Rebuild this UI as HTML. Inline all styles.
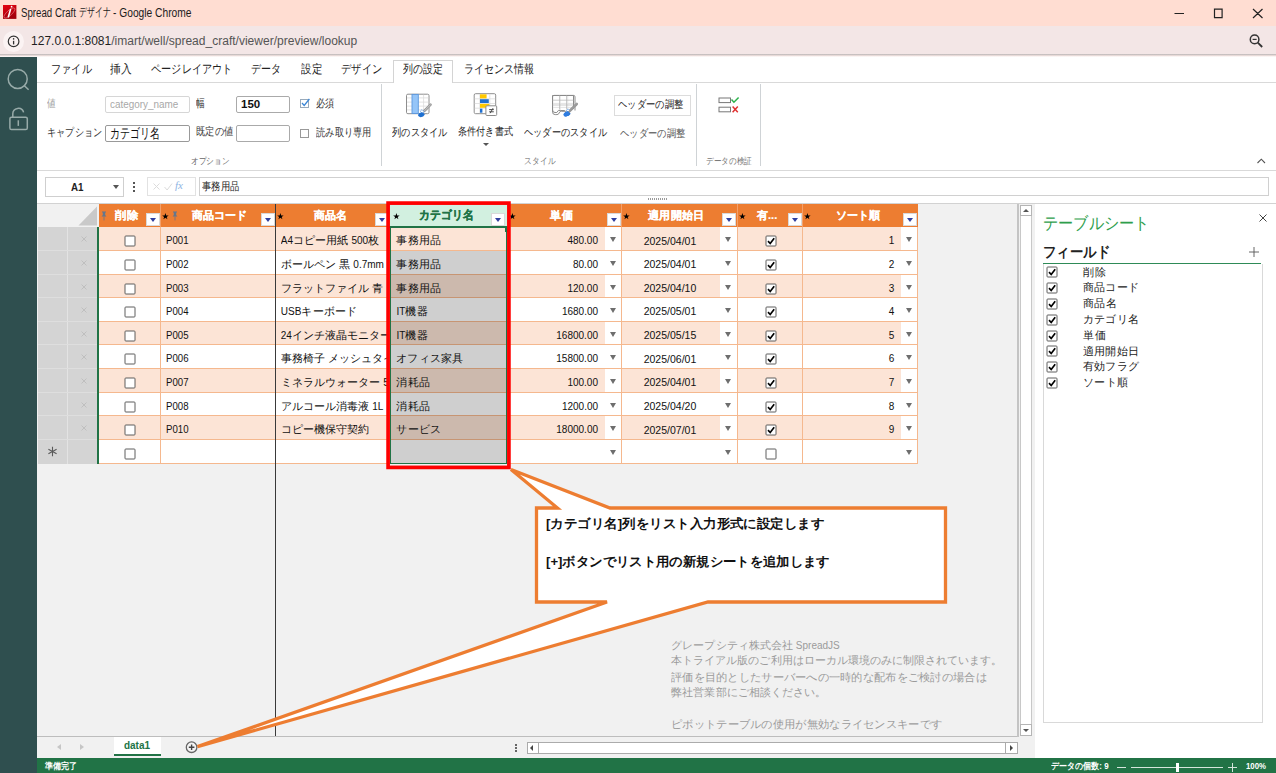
<!DOCTYPE html><html lang="ja"><head><meta charset="utf-8"><title>Spread Craft デザイナ</title><style>
*{box-sizing:border-box;margin:0;padding:0}
html,body{width:1276px;height:773px;overflow:hidden;background:#fff}
body{position:relative;font-family:"Liberation Sans",sans-serif;font-size:11px;color:#222}
.a{position:absolute;white-space:nowrap;overflow:hidden}
.t{position:absolute;white-space:nowrap;line-height:1}
svg{position:absolute;overflow:visible}
.hd{position:absolute;top:204px;height:23px;background:#ED7D31;border-right:1px solid #f19a5e}
.hl{position:absolute;top:0;height:23px;line-height:23px;color:#fff;font-weight:bold;font-size:11px;text-align:center;white-space:nowrap;overflow:hidden}
.fb{position:absolute;top:9px;width:14px;height:13px;background:#fff;border:1px solid #d9d9d9}
.fb:after{content:"";position:absolute;left:2.5px;top:3.5px;border-left:3.5px solid transparent;border-right:3.5px solid transparent;border-top:4px solid #2f3f9f}
.star{position:absolute;top:5px;font-size:10px;color:#000;line-height:12px}
.c{position:absolute;white-space:nowrap;overflow:hidden;font-size:11px;color:#222}
.cb{position:absolute;width:10px;height:10px;border:1px solid #555;border-radius:1.5px;background:#fff}
.dd{position:absolute;background:#fff}
.dd:after{content:"";position:absolute;left:5px;top:10px;border-left:3.5px solid transparent;border-right:3.5px solid transparent;border-top:5px solid #6e6e6e}
.inp{position:absolute;background:#fff;border:1px solid #bdbdbd;border-radius:2px;font-size:12px;line-height:15px;padding-left:4px;white-space:nowrap;overflow:hidden}
</style></head><body>
<div class="a" style="left:0;top:0;width:1276px;height:26px;background:#FFDDD2"></div>
<svg style="left:2.8px;top:5px" width="14" height="14" viewBox="0 0 14 14"><defs><linearGradient id="rg" x1="0" y1="0" x2="0.35" y2="1"><stop offset="0" stop-color="#e6000f"/><stop offset="1" stop-color="#a3000c"/></linearGradient></defs><rect width="13.4" height="13.9" fill="url(#rg)"/><ellipse cx="6.4" cy="8" rx="7" ry="2.5" transform="rotate(-42 6.4 8)" stroke="#f0a0a6" stroke-width="0.5" fill="none"/><path d="M7.5 4.6L5.4 11.8" stroke="#fff" stroke-width="1.6" stroke-linecap="round"/><circle cx="8.6" cy="1.7" r="0.85" fill="#fff"/></svg>
<div class="t" style="left:21.0px;top:7.0px;font-size:12px;color:#1b1b1b;transform:scaleX(0.808);transform-origin:0 0;">Spread Craft</div>
<div class="t" style="left:78.5px;top:7.2px;font-size:11.5px;color:#1b1b1b;transform:scaleX(0.656);transform-origin:0 0;width:48.4px;text-align-last:justify;">デザイナ</div>
<div class="t" style="left:113.0px;top:7.0px;font-size:12px;color:#1b1b1b;transform:scaleX(0.853);transform-origin:0 0;">- Google Chrome</div>
<svg style="left:1170px;top:4px" width="100" height="20" viewBox="0 0 100 20"><path d="M4.5 9.5h9.5 M44.5 5.2h7.6v8.4h-7.6z M83 5l9.5 9 M92.5 5l-9.5 9" stroke="#222" stroke-width="1.2" fill="none"/></svg>
<div class="a" style="left:0;top:26px;width:1276px;height:28px;background:#F3E6E6"></div>
<div class="a" style="left:0;top:54px;width:1276px;height:3px;background:linear-gradient(#c6bfbf 0%,#c9c3c3 38%,#f4e3e0 55%,#fff 100%)"></div>
<div class="a" style="left:3px;top:31px;width:21px;height:21px;border-radius:11px;background:#fbf3f3"></div>
<svg style="left:7px;top:35px" width="14" height="14" viewBox="0 0 14 14"><circle cx="6.6" cy="6.4" r="5.3" stroke="#333" stroke-width="1.2" fill="none"/><path d="M6.6 5.8v3.6" stroke="#333" stroke-width="1.3"/><circle cx="6.6" cy="3.9" r="0.8" fill="#333"/></svg>
<div class="t" style="left:31.2px;top:34.9px;font-size:12.3px;color:#1f1f1f;transform:scaleX(0.978);transform-origin:0 0;">127.0.0.1:8081<span style="color:#555">/imart/well/spread_craft/viewer/preview/lookup</span></div>
<svg style="left:1247px;top:32px" width="18" height="18" viewBox="0 0 18 18"><circle cx="7.6" cy="7.4" r="4.3" stroke="#333" stroke-width="1.5" fill="none"/><path d="M10.8 10.6l4.4 4.4" stroke="#333" stroke-width="1.8"/><path d="M5.6 7.4h4" stroke="#333" stroke-width="1.2"/></svg>
<div class="a" style="left:0;top:57px;width:37px;height:716px;background:#2F4F4F"></div>
<svg style="left:0;top:57px" width="37" height="90" viewBox="0 57 37 90"><circle cx="17.7" cy="78.9" r="9.5" stroke="#98aba9" stroke-width="1.5" fill="none"/><path d="M24.4 85.8l4.2 4" stroke="#98aba9" stroke-width="1.5"/><rect x="9.9" y="117.2" width="17.4" height="12.4" rx="1.6" stroke="#98aba9" stroke-width="1.5" fill="none"/><path d="M12.8 117v-3.2a5.5 5.5 0 0 1 10.8 -1.4" stroke="#98aba9" stroke-width="1.5" fill="none"/><path d="M18.3 120.3v5.6" stroke="#98aba9" stroke-width="1.5"/></svg>
<div class="a" style="left:37px;top:82px;width:1239px;height:1px;background:#d9d9d9"></div>
<div class="a" style="left:393px;top:60px;width:60px;height:23px;background:#fff;border:1px solid #d4d4d4;border-bottom:none"></div>
<div class="t" style="left:50.5px;top:63.8px;font-size:11.5px;color:#222;transform:scaleX(0.844);transform-origin:0 0;width:48.4px;text-align-last:justify;">ファイル</div>
<div class="t" style="left:110.0px;top:63.8px;font-size:11.5px;color:#222;transform:scaleX(0.896);transform-origin:0 0;width:24.4px;text-align-last:justify;">挿入</div>
<div class="t" style="left:150.5px;top:63.8px;font-size:11.5px;color:#222;transform:scaleX(0.846);transform-origin:0 0;width:96.4px;text-align-last:justify;">ページレイアウト</div>
<div class="t" style="left:250.8px;top:63.8px;font-size:11.5px;color:#222;transform:scaleX(0.833);transform-origin:0 0;width:36.4px;text-align-last:justify;">データ</div>
<div class="t" style="left:301.0px;top:63.8px;font-size:11.5px;color:#222;transform:scaleX(0.875);transform-origin:0 0;width:24.4px;text-align-last:justify;">設定</div>
<div class="t" style="left:341.0px;top:63.8px;font-size:11.5px;color:#222;transform:scaleX(0.854);transform-origin:0 0;width:48.4px;text-align-last:justify;">デザイン</div>
<div class="t" style="left:402.6px;top:63.8px;font-size:11.5px;color:#222;transform:scaleX(0.829);transform-origin:0 0;width:48.4px;text-align-last:justify;">列の設定</div>
<div class="t" style="left:464.3px;top:63.8px;font-size:11.5px;color:#222;transform:scaleX(0.832);transform-origin:0 0;width:84.4px;text-align-last:justify;">ライセンス情報</div>
<div class="a" style="left:37px;top:170px;width:1239px;height:1px;background:#d9d9d9"></div>
<div class="a" style="left:381px;top:84px;width:1px;height:82px;background:#cfd3d6"></div>
<div class="a" style="left:696px;top:84px;width:1px;height:82px;background:#cfd3d6"></div>
<div class="a" style="left:760px;top:84px;width:1px;height:82px;background:#cfd3d6"></div>
<div class="t" style="left:47.0px;top:98.0px;font-size:11px;color:#9a9a9a;transform:scaleX(0.773);transform-origin:0 0;width:11.4px;text-align-last:justify;">値</div>
<div class="inp" style="left:105px;top:96px;width:85px;height:17px;border-color:#d6d6d6"></div>
<div class="t" style="left:110.3px;top:98.5px;font-size:11.5px;color:#a8a8a8;transform:scaleX(0.861);transform-origin:0 0;">category_name</div>
<div class="t" style="left:196.3px;top:97.7px;font-size:11px;color:#333;transform:scaleX(0.791);transform-origin:0 0;width:11.4px;text-align-last:justify;">幅</div>
<div class="inp" style="left:236px;top:96px;width:54px;height:17px;color:#111;font-weight:bold;font-size:11.5px;border-color:#aaa">150</div>
<div class="a" style="left:300px;top:99px;width:9px;height:9px;border:1px solid #9ab;background:#fff"></div>
<svg style="left:300px;top:97px" width="11" height="11" viewBox="0 0 11 11"><path d="M2 6l2.2 2.4L9.4 2" stroke="#3b86d6" stroke-width="1.3" fill="none"/></svg>
<div class="t" style="left:316.2px;top:97.7px;font-size:11px;color:#333;transform:scaleX(0.832);transform-origin:0 0;width:22.4px;text-align-last:justify;">必須</div>
<div class="t" style="left:47.0px;top:126.5px;font-size:11px;color:#333;transform:scaleX(0.833);transform-origin:0 0;width:66.4px;text-align-last:justify;">キャプション</div>
<div class="inp" style="left:105px;top:125px;width:85px;height:17px;border-color:#999"></div>
<div class="t" style="left:110.0px;top:126.8px;font-size:13.5px;color:#111;transform:scaleX(0.714);transform-origin:0 0;width:70.4px;text-align-last:justify;">カテゴリ名</div>
<div class="t" style="left:196.3px;top:126.3px;font-size:11px;color:#333;transform:scaleX(0.834);transform-origin:0 0;width:44.4px;text-align-last:justify;">既定の値</div>
<div class="inp" style="left:236px;top:125px;width:54px;height:17px;border-color:#aaa"></div>
<div class="a" style="left:300px;top:129px;width:9px;height:9px;border:1px solid #999;background:#fff"></div>
<div class="t" style="left:316.2px;top:126.5px;font-size:11px;color:#333;transform:scaleX(0.835);transform-origin:0 0;width:66.4px;text-align-last:justify;">読み取り専用</div>
<div class="t" style="left:190.7px;top:156.7px;font-size:9px;color:#666;transform:scaleX(0.851);transform-origin:0 0;width:45.4px;text-align-last:justify;">オプション</div>
<svg style="left:395px;top:88px" width="200" height="34" viewBox="395 88 200 34"><rect x="406.5" y="94.2" width="22.5" height="19.5" rx="1.4" fill="#fff" stroke="#8e8e8e" stroke-width="1"/><path d="M407 97.9h21.5M407 102.1h21.5M407 106.1h21.5M407 109.9h21.5M423.6 94.7v18.5" stroke="#dcdcdc" stroke-width="0.8" fill="none"/><rect x="412" y="94.4" width="6.3" height="19.1" fill="#95c5f8" stroke="#5b97dd" stroke-width="0.9"/><path d="M430.6 104.7L424.2 111" stroke="#9a9a9a" stroke-width="2.5" stroke-linecap="round"/><path d="M430.6 104.7L424.2 111" stroke="#e9e9e9" stroke-width="0.6"/><path d="M422.0 109.6l2.2 2.3l-1.7 1.6l-2.3-2.2z" fill="#fff" stroke="#4a90e2" stroke-width="0.6"/><path d="M417.9 115q1.6-3.2 5.0-2.6l2 2.1q-1.6 3-5 2.6q-1.6-0.4-2-2.1z" fill="#1e6fd0"/><rect x="474.2" y="93.7" width="21.5" height="20" rx="1.4" fill="#fff" stroke="#8e8e8e" stroke-width="1"/><path d="M474.7 98.8h20.5M474.7 103.5h20.5M474.7 108.2h20.5M479.8 94.2v19M489.8 94.2v19" stroke="#dcdcdc" stroke-width="0.8" fill="none"/><rect x="480" y="94.3" width="6.6" height="4.1" fill="#ffc800"/><rect x="480" y="99.2" width="8.8" height="3.8" fill="#1e6fd0"/><rect x="480" y="103.9" width="9.4" height="3.9" fill="#ffc800"/><rect x="480" y="108.7" width="2.4" height="4" fill="#1e6fd0"/><rect x="485.9" y="105.8" width="10.8" height="9.7" rx="1" fill="#fff" stroke="#8a8a8a" stroke-width="1"/><path d="M489.2 109.6h4.6M489.2 111.8h4.6M493 108.2l-2.8 5" stroke="#4a4a4a" stroke-width="1" fill="none"/><path d="M575 110.5V96.8q0-1.4-1.4-1.4h-19.6q-1.4 0-1.4 1.4v15.4q0 2.4 2.6 2.4h1.8q1.7 0 2.1-1.6q0.5-1.7 2.2-1.7h5" fill="#fff" stroke="#8e8e8e" stroke-width="1"/><path d="M553 103.4h21.5M553 107.4h21.5M560.2 96v15.2M567.7 96v15.2" stroke="#dcdcdc" stroke-width="0.8" fill="none"/><path d="M576.8 103.8L570.3 110.2" stroke="#9a9a9a" stroke-width="2.5" stroke-linecap="round"/><path d="M576.8 103.8L570.3 110.2" stroke="#e9e9e9" stroke-width="0.6"/><path d="M568.1 108.8l2.2 2.3l-1.7 1.6l-2.3-2.2z" fill="#fff" stroke="#4a90e2" stroke-width="0.6"/><path d="M563.6 114.2q1.6-3.2 5.0-2.6l2 2.1q-1.6 3-5 2.6q-1.6-0.4-2-2.1z" fill="#1e6fd0"/></svg>
<div class="t" style="left:391.7px;top:126.7px;font-size:11px;color:#222;transform:scaleX(0.835);transform-origin:0 0;width:66.4px;text-align-last:justify;">列のスタイル</div>
<div class="t" style="left:458.0px;top:125.7px;font-size:11px;color:#222;transform:scaleX(0.827);transform-origin:0 0;width:66.4px;text-align-last:justify;">条件付き書式</div>
<div class="a" style="left:483px;top:143px;width:0;height:0;border-left:3px solid transparent;border-right:3px solid transparent;border-top:3.5px solid #555"></div>
<svg style="left:551px;top:94px" width="28" height="24" viewBox="0 0 28 24"><path d="M1.5 1.5h21v13.5 M1.5 1.5v14.5q0 2.5 2.5 2.5h1.8q1.5-3.2 3.5-2h4.5" fill="none" stroke="#8a8a8a" stroke-width="1"/><path d="M1.5 6.2h21M1.5 11h21M8.5 1.5v14M15.5 1.5v14" stroke="#b5b5b5" stroke-width="0.7" fill="none"/><path d="M25.5 10.5L17.5 18.5" stroke="#9a9a9a" stroke-width="2.2" stroke-linecap="round"/><ellipse cx="15.5" cy="20" rx="3.2" ry="2.2" fill="#2f7de0" transform="rotate(-35 15.5 20)"/></svg>
<div class="t" style="left:523.9px;top:126.7px;font-size:11px;color:#222;transform:scaleX(0.835);transform-origin:0 0;width:99.4px;text-align-last:justify;">ヘッダーのスタイル</div>
<div class="a" style="left:614px;top:95px;width:77px;height:21px;border:1px solid #dcdcdc;background:#fff"></div>
<div class="t" style="left:618.0px;top:99.3px;font-size:11px;color:#222;transform:scaleX(0.844);transform-origin:0 0;width:77.4px;text-align-last:justify;">ヘッダーの調整</div>
<div class="t" style="left:620.4px;top:127.8px;font-size:11px;color:#555;transform:scaleX(0.844);transform-origin:0 0;width:77.4px;text-align-last:justify;">ヘッダーの調整</div>
<div class="t" style="left:524.0px;top:156.8px;font-size:9px;color:#777;transform:scaleX(0.861);transform-origin:0 0;width:36.4px;text-align-last:justify;">スタイル</div>
<svg style="left:718px;top:96px" width="22" height="18" viewBox="0 0 22 18"><rect x="1" y="2" width="11.5" height="4.6" fill="#fff" stroke="#777" stroke-width="1"/><rect x="1" y="11.2" width="11.5" height="4.6" fill="#fff" stroke="#777" stroke-width="1"/><path d="M13.5 3.6l2.4 2.6L20.6 1.4" stroke="#2bb24c" stroke-width="1.5" fill="none"/><path d="M14.6 10.6l5.2 5.6M19.8 10.6l-5.2 5.6" stroke="#e03131" stroke-width="1.5" fill="none"/></svg>
<div class="t" style="left:706.0px;top:156.7px;font-size:9px;color:#777;transform:scaleX(0.846);transform-origin:0 0;width:54.4px;text-align-last:justify;">データの検証</div>
<svg style="left:1256px;top:157px" width="10" height="8" viewBox="0 0 10 8"><path d="M1.5 6l3.8-3.8L9 6" stroke="#555" stroke-width="1.1" fill="none"/></svg>
<div class="a" style="left:45px;top:177px;width:79px;height:20px;border:1px solid #cfcfcf;background:#fff"></div>
<div class="t" style="left:70.8px;top:181.6px;font-size:11.5px;color:#222;font-weight:bold;transform:scaleX(0.850);transform-origin:0 0;">A1</div>
<div class="a" style="left:113px;top:185px;width:0;height:0;border-left:3px solid transparent;border-right:3px solid transparent;border-top:4px solid #555"></div>
<div class="a" style="left:133px;top:182px;width:2px;height:2px;background:#555"></div>
<div class="a" style="left:133px;top:186px;width:2px;height:2px;background:#555"></div>
<div class="a" style="left:133px;top:190px;width:2px;height:2px;background:#555"></div>
<div class="a" style="left:147px;top:177px;width:49px;height:19px;border:1px solid #e2e2e2;background:#fff"></div>
<svg style="left:152px;top:181px" width="40" height="12" viewBox="0 0 40 12"><path d="M1.5 2.5l6 6M7.5 2.5l-6 6" stroke="#dcdcdc" stroke-width="1"/><path d="M12.5 6l2.6 3L20 2.6" stroke="#dcdcdc" stroke-width="1" fill="none"/></svg>
<div class="t" style="left:175px;top:180px;font-family:'Liberation Serif',serif;font-style:italic;font-size:11px;color:#8eb4e3">fx</div>
<div class="a" style="left:199px;top:177px;width:1070px;height:19px;border:1px solid #d0d0d0;background:#fff"></div>
<div class="t" style="left:202.4px;top:181.3px;font-size:10.5px;color:#222;transform:scaleX(0.843);transform-origin:0 0;width:44.4px;text-align-last:justify;">事務用品</div>
<div class="a" style="left:648px;top:198px;width:1px;height:2px;background:#9a9a9a"></div>
<div class="a" style="left:650px;top:198px;width:1px;height:2px;background:#9a9a9a"></div>
<div class="a" style="left:652px;top:198px;width:1px;height:2px;background:#9a9a9a"></div>
<div class="a" style="left:654px;top:198px;width:1px;height:2px;background:#9a9a9a"></div>
<div class="a" style="left:656px;top:198px;width:1px;height:2px;background:#9a9a9a"></div>
<div class="a" style="left:658px;top:198px;width:1px;height:2px;background:#9a9a9a"></div>
<div class="a" style="left:660px;top:198px;width:1px;height:2px;background:#9a9a9a"></div>
<div class="a" style="left:662px;top:198px;width:1px;height:2px;background:#9a9a9a"></div>
<div class="a" style="left:664px;top:198px;width:1px;height:2px;background:#9a9a9a"></div>
<div class="a" style="left:666px;top:198px;width:1px;height:2px;background:#9a9a9a"></div>
<div class="a" style="left:37px;top:204px;width:981px;height:533px;background:#F1F1F1"></div>
<div class="a" style="left:37px;top:736px;width:981px;height:1px;background:#bdbdbd"></div>
<div class="a" style="left:37px;top:203px;width:1239px;height:1px;background:#d2d2d2"></div>
<svg style="left:78px;top:206px" width="20" height="20" viewBox="0 0 20 20"><path d="M19 0.5V19.5H0.5z" fill="#c9c9c9"/></svg>
<div class="a" style="left:38px;top:227px;width:60px;height:237px;background:#D4D4D4"></div>
<div class="a" style="left:67px;top:227px;width:1px;height:237px;background:#e3e3e3"></div>
<div class="a" style="left:38px;top:250px;width:60px;height:1px;background:#dedede"></div>
<div class="a" style="left:38px;top:274px;width:60px;height:1px;background:#dedede"></div>
<div class="a" style="left:38px;top:297px;width:60px;height:1px;background:#dedede"></div>
<div class="a" style="left:38px;top:321px;width:60px;height:1px;background:#dedede"></div>
<div class="a" style="left:38px;top:344px;width:60px;height:1px;background:#dedede"></div>
<div class="a" style="left:38px;top:368px;width:60px;height:1px;background:#dedede"></div>
<div class="a" style="left:38px;top:392px;width:60px;height:1px;background:#dedede"></div>
<div class="a" style="left:38px;top:415px;width:60px;height:1px;background:#dedede"></div>
<div class="a" style="left:38px;top:439px;width:60px;height:1px;background:#dedede"></div>
<svg style="left:80px;top:235px" width="8" height="8" viewBox="0 0 8 8"><path d="M1.5 1.5l5 5M6.5 1.5l-5 5" stroke="#bcbcbc" stroke-width="0.9"/></svg>
<svg style="left:80px;top:259px" width="8" height="8" viewBox="0 0 8 8"><path d="M1.5 1.5l5 5M6.5 1.5l-5 5" stroke="#bcbcbc" stroke-width="0.9"/></svg>
<svg style="left:80px;top:283px" width="8" height="8" viewBox="0 0 8 8"><path d="M1.5 1.5l5 5M6.5 1.5l-5 5" stroke="#bcbcbc" stroke-width="0.9"/></svg>
<svg style="left:80px;top:306px" width="8" height="8" viewBox="0 0 8 8"><path d="M1.5 1.5l5 5M6.5 1.5l-5 5" stroke="#bcbcbc" stroke-width="0.9"/></svg>
<svg style="left:80px;top:330px" width="8" height="8" viewBox="0 0 8 8"><path d="M1.5 1.5l5 5M6.5 1.5l-5 5" stroke="#bcbcbc" stroke-width="0.9"/></svg>
<svg style="left:80px;top:353px" width="8" height="8" viewBox="0 0 8 8"><path d="M1.5 1.5l5 5M6.5 1.5l-5 5" stroke="#bcbcbc" stroke-width="0.9"/></svg>
<svg style="left:80px;top:377px" width="8" height="8" viewBox="0 0 8 8"><path d="M1.5 1.5l5 5M6.5 1.5l-5 5" stroke="#bcbcbc" stroke-width="0.9"/></svg>
<svg style="left:80px;top:401px" width="8" height="8" viewBox="0 0 8 8"><path d="M1.5 1.5l5 5M6.5 1.5l-5 5" stroke="#bcbcbc" stroke-width="0.9"/></svg>
<svg style="left:80px;top:424px" width="8" height="8" viewBox="0 0 8 8"><path d="M1.5 1.5l5 5M6.5 1.5l-5 5" stroke="#bcbcbc" stroke-width="0.9"/></svg>
<svg style="left:47px;top:446px" width="11" height="11" viewBox="0 0 11 11"><path d="M5.5 0.8v9.4M1.4 3.2l8.2 4.6M9.6 3.2l-8.2 4.6" stroke="#5a5a5a" stroke-width="1.1" fill="none"/></svg>
<div class="a" style="left:99px;top:227px;width:819px;height:24px;background:#FCE4D6"></div>
<div class="a" style="left:99px;top:250px;width:819px;height:1px;background:#F5B88E"></div>
<div class="a" style="left:99px;top:251px;width:819px;height:24px;background:#fff"></div>
<div class="a" style="left:99px;top:274px;width:819px;height:1px;background:#F5B88E"></div>
<div class="a" style="left:99px;top:275px;width:819px;height:23px;background:#FCE4D6"></div>
<div class="a" style="left:99px;top:297px;width:819px;height:1px;background:#F5B88E"></div>
<div class="a" style="left:99px;top:298px;width:819px;height:24px;background:#fff"></div>
<div class="a" style="left:99px;top:321px;width:819px;height:1px;background:#F5B88E"></div>
<div class="a" style="left:99px;top:322px;width:819px;height:23px;background:#FCE4D6"></div>
<div class="a" style="left:99px;top:344px;width:819px;height:1px;background:#F5B88E"></div>
<div class="a" style="left:99px;top:345px;width:819px;height:24px;background:#fff"></div>
<div class="a" style="left:99px;top:368px;width:819px;height:1px;background:#F5B88E"></div>
<div class="a" style="left:99px;top:369px;width:819px;height:24px;background:#FCE4D6"></div>
<div class="a" style="left:99px;top:392px;width:819px;height:1px;background:#F5B88E"></div>
<div class="a" style="left:99px;top:393px;width:819px;height:23px;background:#fff"></div>
<div class="a" style="left:99px;top:415px;width:819px;height:1px;background:#F5B88E"></div>
<div class="a" style="left:99px;top:416px;width:819px;height:24px;background:#FCE4D6"></div>
<div class="a" style="left:99px;top:439px;width:819px;height:1px;background:#F5B88E"></div>
<div class="a" style="left:99px;top:440px;width:819px;height:24px;background:#fff"></div>
<div class="a" style="left:99px;top:463px;width:819px;height:1px;background:#F5B88E"></div>
<div class="a" style="left:160px;top:227px;width:1px;height:237px;background:#F5B88E"></div>
<div class="a" style="left:388px;top:227px;width:1px;height:237px;background:#F5B88E"></div>
<div class="a" style="left:508px;top:227px;width:1px;height:237px;background:#F5B88E"></div>
<div class="a" style="left:621px;top:227px;width:1px;height:237px;background:#F5B88E"></div>
<div class="a" style="left:737px;top:227px;width:1px;height:237px;background:#F5B88E"></div>
<div class="a" style="left:802px;top:227px;width:1px;height:237px;background:#F5B88E"></div>
<div class="a" style="left:917px;top:227px;width:1px;height:237px;background:#F5B88E"></div>
<div class="dd" style="left:605px;top:227px;width:16px;height:23px"></div>
<div class="dd" style="left:720px;top:227px;width:17px;height:23px"></div>
<div class="dd" style="left:901px;top:227px;width:16px;height:23px"></div>
<div class="dd" style="left:605px;top:251px;width:16px;height:23px"></div>
<div class="dd" style="left:720px;top:251px;width:17px;height:23px"></div>
<div class="dd" style="left:901px;top:251px;width:16px;height:23px"></div>
<div class="dd" style="left:605px;top:275px;width:16px;height:22px"></div>
<div class="dd" style="left:720px;top:275px;width:17px;height:22px"></div>
<div class="dd" style="left:901px;top:275px;width:16px;height:22px"></div>
<div class="dd" style="left:605px;top:298px;width:16px;height:23px"></div>
<div class="dd" style="left:720px;top:298px;width:17px;height:23px"></div>
<div class="dd" style="left:901px;top:298px;width:16px;height:23px"></div>
<div class="dd" style="left:605px;top:322px;width:16px;height:22px"></div>
<div class="dd" style="left:720px;top:322px;width:17px;height:22px"></div>
<div class="dd" style="left:901px;top:322px;width:16px;height:22px"></div>
<div class="dd" style="left:605px;top:345px;width:16px;height:23px"></div>
<div class="dd" style="left:720px;top:345px;width:17px;height:23px"></div>
<div class="dd" style="left:901px;top:345px;width:16px;height:23px"></div>
<div class="dd" style="left:605px;top:369px;width:16px;height:23px"></div>
<div class="dd" style="left:720px;top:369px;width:17px;height:23px"></div>
<div class="dd" style="left:901px;top:369px;width:16px;height:23px"></div>
<div class="dd" style="left:605px;top:393px;width:16px;height:22px"></div>
<div class="dd" style="left:720px;top:393px;width:17px;height:22px"></div>
<div class="dd" style="left:901px;top:393px;width:16px;height:22px"></div>
<div class="dd" style="left:605px;top:416px;width:16px;height:23px"></div>
<div class="dd" style="left:720px;top:416px;width:17px;height:23px"></div>
<div class="dd" style="left:901px;top:416px;width:16px;height:23px"></div>
<div class="dd" style="left:605px;top:440px;width:16px;height:23px"></div>
<div class="dd" style="left:720px;top:440px;width:17px;height:23px"></div>
<div class="dd" style="left:901px;top:440px;width:16px;height:23px"></div>
<div class="a" style="left:390px;top:251px;width:117px;height:213px;background:rgba(0,0,0,0.19)"></div>
<div class="a" style="left:99px;top:204px;width:61px;height:23px;background:#ED7D31"></div>
<div class="a" style="left:160px;top:204px;width:115px;height:23px;background:#ED7D31"></div>
<div class="a" style="left:276px;top:204px;width:112px;height:23px;background:#ED7D31"></div>
<div class="a" style="left:508px;top:204px;width:114px;height:23px;background:#ED7D31"></div>
<div class="a" style="left:622px;top:204px;width:115px;height:23px;background:#ED7D31"></div>
<div class="a" style="left:737px;top:204px;width:66px;height:23px;background:#ED7D31"></div>
<div class="a" style="left:803px;top:204px;width:115px;height:23px;background:#ED7D31"></div>
<div class="a" style="left:160px;top:204px;width:1px;height:23px;background:#f3a06a"></div>
<div class="a" style="left:621px;top:204px;width:1px;height:23px;background:#f3a06a"></div>
<div class="a" style="left:737px;top:204px;width:1px;height:23px;background:#f3a06a"></div>
<div class="a" style="left:802px;top:204px;width:1px;height:23px;background:#f3a06a"></div>
<div class="a" style="left:388px;top:204px;width:120px;height:23px;background:#D2F0E0"></div>
<div class="a" style="left:388px;top:226px;width:120px;height:2px;background:#217346"></div>
<svg style="left:100.7px;top:210.6px" width="6" height="10" viewBox="0 0 6 10"><path d="M1 0.5h4v1.1h-0.8v2.3l1.2 1.5h-4.8l1.2-1.5v-2.3h-0.8z" fill="#64778d"/><path d="M3 5.4v4" stroke="#64778d" stroke-width="0.8"/></svg>
<svg style="left:171.6px;top:210.6px" width="6" height="10" viewBox="0 0 6 10"><path d="M1 0.5h4v1.1h-0.8v2.3l1.2 1.5h-4.8l1.2-1.5v-2.3h-0.8z" fill="#64778d"/><path d="M3 5.4v4" stroke="#64778d" stroke-width="0.8"/></svg>
<div class="t" style="left:115.4px;top:210.2px;font-size:11px;color:#fff;font-weight:bold;-webkit-text-stroke:0.22px #fff;transform:scaleX(1.027);transform-origin:0 0;width:22.4px;text-align-last:justify;">削除</div>
<div class="fb" style="left:146px;top:213px"></div>
<div class="t" style="left:192.0px;top:210.2px;font-size:11px;color:#fff;font-weight:bold;-webkit-text-stroke:0.22px #fff;width:55.4px;text-align-last:justify;">商品コード</div>
<div class="fb" style="left:261px;top:213px"></div>
<svg style="left:161.9px;top:212.6px" width="7" height="7" viewBox="0 0 7 7"><polygon points="3.40,0.10 4.19,2.41 6.63,2.45 4.68,3.92 5.40,6.25 3.40,4.85 1.40,6.25 2.12,3.92 0.17,2.45 2.61,2.41" fill="#000"/></svg>
<div class="t" style="left:313.6px;top:210.2px;font-size:11px;color:#fff;font-weight:bold;-webkit-text-stroke:0.22px #fff;width:33.4px;text-align-last:justify;">商品名</div>
<div class="fb" style="left:375px;top:213px"></div>
<svg style="left:277.3px;top:212.6px" width="7" height="7" viewBox="0 0 7 7"><polygon points="3.40,0.10 4.19,2.41 6.63,2.45 4.68,3.92 5.40,6.25 3.40,4.85 1.40,6.25 2.12,3.92 0.17,2.45 2.61,2.41" fill="#000"/></svg>
<div class="t" style="left:550.3px;top:210.2px;font-size:11px;color:#fff;font-weight:bold;-webkit-text-stroke:0.22px #fff;width:22.4px;text-align-last:justify;">単価</div>
<div class="fb" style="left:607px;top:213px"></div>
<svg style="left:509.2px;top:212.6px" width="7" height="7" viewBox="0 0 7 7"><polygon points="3.40,0.10 4.19,2.41 6.63,2.45 4.68,3.92 5.40,6.25 3.40,4.85 1.40,6.25 2.12,3.92 0.17,2.45 2.61,2.41" fill="#000"/></svg>
<div class="t" style="left:648.4px;top:210.2px;font-size:11px;color:#fff;font-weight:bold;-webkit-text-stroke:0.22px #fff;width:55.4px;text-align-last:justify;">適用開始日</div>
<div class="fb" style="left:722px;top:213px"></div>
<svg style="left:623.2px;top:212.6px" width="7" height="7" viewBox="0 0 7 7"><polygon points="3.40,0.10 4.19,2.41 6.63,2.45 4.68,3.92 5.40,6.25 3.40,4.85 1.40,6.25 2.12,3.92 0.17,2.45 2.61,2.41" fill="#000"/></svg>
<div class="t" style="left:756.6px;top:210.2px;font-size:11px;color:#fff;font-weight:bold;-webkit-text-stroke:0.22px #fff;width:20.6px;text-align-last:justify;">有...</div>
<div class="fb" style="left:788px;top:213px"></div>
<svg style="left:738.7px;top:212.6px" width="7" height="7" viewBox="0 0 7 7"><polygon points="3.40,0.10 4.19,2.41 6.63,2.45 4.68,3.92 5.40,6.25 3.40,4.85 1.40,6.25 2.12,3.92 0.17,2.45 2.61,2.41" fill="#000"/></svg>
<div class="t" style="left:835.8px;top:210.2px;font-size:11px;color:#fff;font-weight:bold;-webkit-text-stroke:0.22px #fff;width:44.4px;text-align-last:justify;">ソート順</div>
<div class="fb" style="left:903px;top:213px"></div>
<svg style="left:803.9px;top:212.6px" width="7" height="7" viewBox="0 0 7 7"><polygon points="3.40,0.10 4.19,2.41 6.63,2.45 4.68,3.92 5.40,6.25 3.40,4.85 1.40,6.25 2.12,3.92 0.17,2.45 2.61,2.41" fill="#000"/></svg>
<svg style="left:392.6px;top:212.6px" width="7" height="7" viewBox="0 0 7 7"><polygon points="3.40,0.10 4.19,2.41 6.63,2.45 4.68,3.92 5.40,6.25 3.40,4.85 1.40,6.25 2.12,3.92 0.17,2.45 2.61,2.41" fill="#000"/></svg>
<div class="t" style="left:418.8px;top:209.8px;font-size:11.5px;color:#217346;font-weight:bold;-webkit-text-stroke:0.3px #217346;transform:scaleX(0.902);transform-origin:0 0;width:60.4px;text-align-last:justify;">カテゴリ名</div>
<div class="fb" style="left:491px;top:213px"></div>
<div class="a" style="left:275px;top:204px;width:1px;height:532px;background:#3a3a3a"></div>
<div class="a" style="left:97px;top:227px;width:2px;height:237px;background:#217346"></div>
<div class="a" style="left:390px;top:227px;width:117px;height:237px;border:1px solid #217346"></div>
<div class="a" style="left:505px;top:228px;width:3px;height:4px;background:#217346"></div>
<svg style="left:124px;top:235px" width="12" height="12" viewBox="0 0 12 12"><rect x="1" y="1" width="10" height="10" rx="0.8" fill="#fff" stroke="#4d4d4d" stroke-width="0.9"/></svg>
<svg style="left:765px;top:235px" width="12" height="12" viewBox="0 0 12 12"><rect x="1" y="1" width="10" height="10" rx="0.8" fill="#fff" stroke="#4d4d4d" stroke-width="0.9"/><path d="M3 6.2l2.2 2.3L9.2 3.3" stroke="#000" stroke-width="1.7" fill="none"/></svg>
<div class="t" style="left:165.5px;top:236.2px;font-size:10px;color:#111;transform:scaleX(0.963);transform-origin:0 0;">P001</div>
<div class="a" style="left:280.8px;top:232.2px;width:106.5px;height:17.0px"><div class="t" style="left:0;top:3px;font-size:11px;color:#111;width:98.4px;text-align-last:justify;"><span style="font-size:10px">A4</span>コピー用紙 <span style="font-size:10px">500</span>枚</div></div>
<div class="t" style="left:396.4px;top:235.2px;font-size:11px;color:#111;width:44.4px;text-align-last:justify;">事務用品</div>
<div class="t" style="left:567.4px;top:236.2px;font-size:10px;color:#111;">480.00</div>
<div class="t" style="left:643.7px;top:235.6px;font-size:10.5px;color:#111;">2025/04/01</div>
<div class="t" style="left:888.7px;top:236.2px;font-size:10px;color:#111;">1</div>
<svg style="left:124px;top:259px" width="12" height="12" viewBox="0 0 12 12"><rect x="1" y="1" width="10" height="10" rx="0.8" fill="#fff" stroke="#4d4d4d" stroke-width="0.9"/></svg>
<svg style="left:765px;top:259px" width="12" height="12" viewBox="0 0 12 12"><rect x="1" y="1" width="10" height="10" rx="0.8" fill="#fff" stroke="#4d4d4d" stroke-width="0.9"/><path d="M3 6.2l2.2 2.3L9.2 3.3" stroke="#000" stroke-width="1.7" fill="none"/></svg>
<div class="t" style="left:165.5px;top:259.8px;font-size:10px;color:#111;transform:scaleX(0.963);transform-origin:0 0;">P002</div>
<div class="a" style="left:280.8px;top:255.8px;width:106.5px;height:17.0px"><div class="t" style="left:0;top:3px;font-size:11px;color:#111;width:103.1px;text-align-last:justify;">ボールペン 黒 <span style="font-size:10px">0.7mm</span></div></div>
<div class="t" style="left:396.4px;top:258.8px;font-size:11px;color:#111;width:44.4px;text-align-last:justify;">事務用品</div>
<div class="t" style="left:573.0px;top:259.8px;font-size:10px;color:#111;">80.00</div>
<div class="t" style="left:643.7px;top:259.2px;font-size:10.5px;color:#111;">2025/04/01</div>
<div class="t" style="left:888.7px;top:259.8px;font-size:10px;color:#111;">2</div>
<svg style="left:124px;top:283px" width="12" height="12" viewBox="0 0 12 12"><rect x="1" y="1" width="10" height="10" rx="0.8" fill="#fff" stroke="#4d4d4d" stroke-width="0.9"/></svg>
<svg style="left:765px;top:283px" width="12" height="12" viewBox="0 0 12 12"><rect x="1" y="1" width="10" height="10" rx="0.8" fill="#fff" stroke="#4d4d4d" stroke-width="0.9"/><path d="M3 6.2l2.2 2.3L9.2 3.3" stroke="#000" stroke-width="1.7" fill="none"/></svg>
<div class="t" style="left:165.5px;top:283.5px;font-size:10px;color:#111;transform:scaleX(0.963);transform-origin:0 0;">P003</div>
<div class="a" style="left:280.8px;top:279.5px;width:106.5px;height:17.0px"><div class="t" style="left:0;top:3px;font-size:11px;color:#111;width:102.5px;text-align-last:justify;">フラットファイル 青</div></div>
<div class="t" style="left:396.4px;top:282.5px;font-size:11px;color:#111;width:44.4px;text-align-last:justify;">事務用品</div>
<div class="t" style="left:567.4px;top:283.5px;font-size:10px;color:#111;">120.00</div>
<div class="t" style="left:643.7px;top:282.8px;font-size:10.5px;color:#111;">2025/04/10</div>
<div class="t" style="left:888.7px;top:283.5px;font-size:10px;color:#111;">3</div>
<svg style="left:124px;top:306px" width="12" height="12" viewBox="0 0 12 12"><rect x="1" y="1" width="10" height="10" rx="0.8" fill="#fff" stroke="#4d4d4d" stroke-width="0.9"/></svg>
<svg style="left:765px;top:306px" width="12" height="12" viewBox="0 0 12 12"><rect x="1" y="1" width="10" height="10" rx="0.8" fill="#fff" stroke="#4d4d4d" stroke-width="0.9"/><path d="M3 6.2l2.2 2.3L9.2 3.3" stroke="#000" stroke-width="1.7" fill="none"/></svg>
<div class="t" style="left:165.5px;top:307.1px;font-size:10px;color:#111;transform:scaleX(0.963);transform-origin:0 0;">P004</div>
<div class="a" style="left:280.8px;top:303.1px;width:106.5px;height:17.0px"><div class="t" style="left:0;top:3px;font-size:11px;color:#111;width:76.0px;text-align-last:justify;"><span style="font-size:10px">USB</span>キーボード</div></div>
<div class="t" style="left:396.4px;top:306.1px;font-size:11px;color:#111;width:31.3px;text-align-last:justify;"><span style="font-size:10px">IT</span>機器</div>
<div class="t" style="left:561.9px;top:307.1px;font-size:10px;color:#111;">1680.00</div>
<div class="t" style="left:643.7px;top:306.4px;font-size:10.5px;color:#111;">2025/05/01</div>
<div class="t" style="left:888.7px;top:307.1px;font-size:10px;color:#111;">4</div>
<svg style="left:124px;top:330px" width="12" height="12" viewBox="0 0 12 12"><rect x="1" y="1" width="10" height="10" rx="0.8" fill="#fff" stroke="#4d4d4d" stroke-width="0.9"/></svg>
<svg style="left:765px;top:330px" width="12" height="12" viewBox="0 0 12 12"><rect x="1" y="1" width="10" height="10" rx="0.8" fill="#fff" stroke="#4d4d4d" stroke-width="0.9"/><path d="M3 6.2l2.2 2.3L9.2 3.3" stroke="#000" stroke-width="1.7" fill="none"/></svg>
<div class="t" style="left:165.5px;top:330.7px;font-size:10px;color:#111;transform:scaleX(0.963);transform-origin:0 0;">P005</div>
<div class="a" style="left:280.8px;top:326.7px;width:106.5px;height:17.0px"><div class="t" style="left:0;top:3px;font-size:11px;color:#111;width:110.5px;text-align-last:justify;"><span style="font-size:10px">24</span>インチ液晶モニター</div></div>
<div class="t" style="left:396.4px;top:329.7px;font-size:11px;color:#111;width:31.3px;text-align-last:justify;"><span style="font-size:10px">IT</span>機器</div>
<div class="t" style="left:556.3px;top:330.7px;font-size:10px;color:#111;">16800.00</div>
<div class="t" style="left:643.7px;top:330.1px;font-size:10.5px;color:#111;">2025/05/15</div>
<div class="t" style="left:888.7px;top:330.7px;font-size:10px;color:#111;">5</div>
<svg style="left:124px;top:353px" width="12" height="12" viewBox="0 0 12 12"><rect x="1" y="1" width="10" height="10" rx="0.8" fill="#fff" stroke="#4d4d4d" stroke-width="0.9"/></svg>
<svg style="left:765px;top:353px" width="12" height="12" viewBox="0 0 12 12"><rect x="1" y="1" width="10" height="10" rx="0.8" fill="#fff" stroke="#4d4d4d" stroke-width="0.9"/><path d="M3 6.2l2.2 2.3L9.2 3.3" stroke="#000" stroke-width="1.7" fill="none"/></svg>
<div class="t" style="left:165.5px;top:354.3px;font-size:10px;color:#111;transform:scaleX(0.963);transform-origin:0 0;">P006</div>
<div class="a" style="left:280.8px;top:350.3px;width:106.5px;height:17.0px"><div class="t" style="left:0;top:3px;font-size:11px;color:#111;width:124.5px;text-align-last:justify;">事務椅子 メッシュタイプ</div></div>
<div class="t" style="left:396.4px;top:353.3px;font-size:11px;color:#111;width:66.4px;text-align-last:justify;">オフィス家具</div>
<div class="t" style="left:556.3px;top:354.3px;font-size:10px;color:#111;">15800.00</div>
<div class="t" style="left:643.7px;top:353.7px;font-size:10.5px;color:#111;">2025/06/01</div>
<div class="t" style="left:888.7px;top:354.3px;font-size:10px;color:#111;">6</div>
<svg style="left:124px;top:377px" width="12" height="12" viewBox="0 0 12 12"><rect x="1" y="1" width="10" height="10" rx="0.8" fill="#fff" stroke="#4d4d4d" stroke-width="0.9"/></svg>
<svg style="left:765px;top:377px" width="12" height="12" viewBox="0 0 12 12"><rect x="1" y="1" width="10" height="10" rx="0.8" fill="#fff" stroke="#4d4d4d" stroke-width="0.9"/><path d="M3 6.2l2.2 2.3L9.2 3.3" stroke="#000" stroke-width="1.7" fill="none"/></svg>
<div class="t" style="left:165.5px;top:378.0px;font-size:10px;color:#111;transform:scaleX(0.963);transform-origin:0 0;">P007</div>
<div class="a" style="left:280.8px;top:374.0px;width:106.5px;height:17.0px"><div class="t" style="left:0;top:3px;font-size:11px;color:#111;width:132.4px;text-align-last:justify;">ミネラルウォーター 500ml</div></div>
<div class="t" style="left:396.4px;top:377.0px;font-size:11px;color:#111;width:33.4px;text-align-last:justify;">消耗品</div>
<div class="t" style="left:567.4px;top:378.0px;font-size:10px;color:#111;">100.00</div>
<div class="t" style="left:643.7px;top:377.3px;font-size:10.5px;color:#111;">2025/04/01</div>
<div class="t" style="left:888.7px;top:378.0px;font-size:10px;color:#111;">7</div>
<svg style="left:124px;top:401px" width="12" height="12" viewBox="0 0 12 12"><rect x="1" y="1" width="10" height="10" rx="0.8" fill="#fff" stroke="#4d4d4d" stroke-width="0.9"/></svg>
<svg style="left:765px;top:401px" width="12" height="12" viewBox="0 0 12 12"><rect x="1" y="1" width="10" height="10" rx="0.8" fill="#fff" stroke="#4d4d4d" stroke-width="0.9"/><path d="M3 6.2l2.2 2.3L9.2 3.3" stroke="#000" stroke-width="1.7" fill="none"/></svg>
<div class="t" style="left:165.5px;top:401.6px;font-size:10px;color:#111;transform:scaleX(0.963);transform-origin:0 0;">P008</div>
<div class="a" style="left:280.8px;top:397.6px;width:106.5px;height:17.0px"><div class="t" style="left:0;top:3px;font-size:11px;color:#111;width:102.6px;text-align-last:justify;">アルコール消毒液 <span style="font-size:10px">1L</span></div></div>
<div class="t" style="left:396.4px;top:400.6px;font-size:11px;color:#111;width:33.4px;text-align-last:justify;">消耗品</div>
<div class="t" style="left:561.9px;top:401.6px;font-size:10px;color:#111;">1200.00</div>
<div class="t" style="left:643.7px;top:401.0px;font-size:10.5px;color:#111;">2025/04/20</div>
<div class="t" style="left:888.7px;top:401.6px;font-size:10px;color:#111;">8</div>
<svg style="left:124px;top:424px" width="12" height="12" viewBox="0 0 12 12"><rect x="1" y="1" width="10" height="10" rx="0.8" fill="#fff" stroke="#4d4d4d" stroke-width="0.9"/></svg>
<svg style="left:765px;top:424px" width="12" height="12" viewBox="0 0 12 12"><rect x="1" y="1" width="10" height="10" rx="0.8" fill="#fff" stroke="#4d4d4d" stroke-width="0.9"/><path d="M3 6.2l2.2 2.3L9.2 3.3" stroke="#000" stroke-width="1.7" fill="none"/></svg>
<div class="t" style="left:165.5px;top:425.2px;font-size:10px;color:#111;transform:scaleX(0.963);transform-origin:0 0;">P010</div>
<div class="a" style="left:280.8px;top:421.2px;width:106.5px;height:17.0px"><div class="t" style="left:0;top:3px;font-size:11px;color:#111;width:88.4px;text-align-last:justify;">コピー機保守契約</div></div>
<div class="t" style="left:396.4px;top:424.2px;font-size:11px;color:#111;width:44.4px;text-align-last:justify;">サービス</div>
<div class="t" style="left:556.3px;top:425.2px;font-size:10px;color:#111;">18000.00</div>
<div class="t" style="left:643.7px;top:424.6px;font-size:10.5px;color:#111;">2025/07/01</div>
<div class="t" style="left:888.7px;top:425.2px;font-size:10px;color:#111;">9</div>
<svg style="left:124px;top:448px" width="12" height="12" viewBox="0 0 12 12"><rect x="1" y="1" width="10" height="10" rx="0.8" fill="#fff" stroke="#4d4d4d" stroke-width="0.9"/></svg>
<svg style="left:765px;top:448px" width="12" height="12" viewBox="0 0 12 12"><rect x="1" y="1" width="10" height="10" rx="0.8" fill="#fff" stroke="#4d4d4d" stroke-width="0.9"/></svg>
<svg style="left:380px;top:196px" width="140" height="280" viewBox="380 196 140 280"><rect x="388.1" y="203.1" width="120.8" height="264.3" fill="none" stroke="#FF0000" stroke-width="3.7"/></svg>
<div class="a" style="left:1017px;top:204px;width:18px;height:533px;background:#F1F1F1"></div>
<div class="a" style="left:1017px;top:204px;width:2px;height:533px;background:#c4c4c4"></div>
<div class="a" style="left:1020px;top:205px;width:12px;height:531px;background:#fff;border:1px solid #c8c8c8"></div>
<div class="a" style="left:1020px;top:205px;width:12px;height:11px;background:#fff;border:1px solid #b5b5b5"></div>
<div class="a" style="left:1020px;top:724px;width:12px;height:12px;background:#fff;border:1px solid #b5b5b5"></div>
<div class="a" style="left:1023px;top:209px;width:0;height:0;border-left:3px solid transparent;border-right:3px solid transparent;border-bottom:3.5px solid #555"></div>
<div class="a" style="left:1023px;top:729px;width:0;height:0;border-left:3px solid transparent;border-right:3px solid transparent;border-top:3.5px solid #555"></div>
<div class="t" style="left:671.4px;top:639.9px;font-size:11px;color:#9b9b9b;width:168.4px;text-align-last:justify;">グレープシティ株式会社 <span style="font-size:10px">SpreadJS</span></div>
<div class="t" style="left:671.4px;top:655.1px;font-size:11px;color:#9b9b9b;width:330.4px;text-align-last:justify;">本トライアル版のご利用はローカル環境のみに制限されています。</div>
<div class="t" style="left:671.4px;top:671.6px;font-size:11px;color:#9b9b9b;transform:scaleX(1.024);transform-origin:0 0;width:308.4px;text-align-last:justify;">評価を目的としたサーバーへの一時的な配布をご検討の場合は</div>
<div class="t" style="left:671.4px;top:687.3px;font-size:11px;color:#9b9b9b;width:154.4px;text-align-last:justify;">弊社営業部にご相談ください。</div>
<div class="t" style="left:671.4px;top:718.9px;font-size:11px;color:#9b9b9b;transform:scaleX(1.026);transform-origin:0 0;width:264.4px;text-align-last:justify;">ピボットテーブルの使用が無効なライセンスキーです</div>
<div class="t" style="left:1043.3px;top:214.5px;font-size:17px;color:#2f9e4c;transform:scaleX(0.891);transform-origin:0 0;width:119.4px;text-align-last:justify;">テーブルシート</div>
<svg style="left:1258px;top:213px" width="10" height="10" viewBox="0 0 10 10"><path d="M1.5 1.5l7 7M8.5 1.5l-7 7" stroke="#444" stroke-width="1"/></svg>
<div class="t" style="left:1043.3px;top:245.1px;font-size:14.5px;color:#222;font-weight:bold;transform:scaleX(0.893);transform-origin:0 0;width:75.4px;text-align-last:justify;">フィールド</div>
<svg style="left:1248px;top:246px" width="12" height="12" viewBox="0 0 12 12"><path d="M6 1v10M1 6h10" stroke="#555" stroke-width="0.9"/></svg>
<div class="a" style="left:1043px;top:264px;width:220px;height:459px;border:1px solid #d9d9d9;border-top:none;background:#fff"></div>
<div class="a" style="left:1043px;top:263px;width:218px;height:1px;background:#2e8b57"></div>
<svg style="left:1046px;top:266.3px" width="12" height="12" viewBox="0 0 12 12"><rect x="1" y="1" width="10" height="10" rx="0.8" fill="#fff" stroke="#4d4d4d" stroke-width="0.9"/><path d="M3 6.2l2.2 2.3L9.2 3.3" stroke="#000" stroke-width="1.7" fill="none"/></svg>
<div class="t" style="left:1083.3px;top:266.5px;font-size:11px;color:#222;width:22.4px;text-align-last:justify;">削除</div>
<svg style="left:1046px;top:282.1px" width="12" height="12" viewBox="0 0 12 12"><rect x="1" y="1" width="10" height="10" rx="0.8" fill="#fff" stroke="#4d4d4d" stroke-width="0.9"/><path d="M3 6.2l2.2 2.3L9.2 3.3" stroke="#000" stroke-width="1.7" fill="none"/></svg>
<div class="t" style="left:1083.3px;top:282.3px;font-size:11px;color:#222;width:55.4px;text-align-last:justify;">商品コード</div>
<svg style="left:1046px;top:297.9px" width="12" height="12" viewBox="0 0 12 12"><rect x="1" y="1" width="10" height="10" rx="0.8" fill="#fff" stroke="#4d4d4d" stroke-width="0.9"/><path d="M3 6.2l2.2 2.3L9.2 3.3" stroke="#000" stroke-width="1.7" fill="none"/></svg>
<div class="t" style="left:1083.3px;top:298.1px;font-size:11px;color:#222;width:33.4px;text-align-last:justify;">商品名</div>
<svg style="left:1046px;top:313.7px" width="12" height="12" viewBox="0 0 12 12"><rect x="1" y="1" width="10" height="10" rx="0.8" fill="#fff" stroke="#4d4d4d" stroke-width="0.9"/><path d="M3 6.2l2.2 2.3L9.2 3.3" stroke="#000" stroke-width="1.7" fill="none"/></svg>
<div class="t" style="left:1083.3px;top:313.9px;font-size:11px;color:#222;width:55.4px;text-align-last:justify;">カテゴリ名</div>
<svg style="left:1046px;top:329.5px" width="12" height="12" viewBox="0 0 12 12"><rect x="1" y="1" width="10" height="10" rx="0.8" fill="#fff" stroke="#4d4d4d" stroke-width="0.9"/><path d="M3 6.2l2.2 2.3L9.2 3.3" stroke="#000" stroke-width="1.7" fill="none"/></svg>
<div class="t" style="left:1083.3px;top:329.7px;font-size:11px;color:#222;width:22.4px;text-align-last:justify;">単価</div>
<svg style="left:1046px;top:345.3px" width="12" height="12" viewBox="0 0 12 12"><rect x="1" y="1" width="10" height="10" rx="0.8" fill="#fff" stroke="#4d4d4d" stroke-width="0.9"/><path d="M3 6.2l2.2 2.3L9.2 3.3" stroke="#000" stroke-width="1.7" fill="none"/></svg>
<div class="t" style="left:1083.3px;top:345.5px;font-size:11px;color:#222;width:55.4px;text-align-last:justify;">適用開始日</div>
<svg style="left:1046px;top:361.1px" width="12" height="12" viewBox="0 0 12 12"><rect x="1" y="1" width="10" height="10" rx="0.8" fill="#fff" stroke="#4d4d4d" stroke-width="0.9"/><path d="M3 6.2l2.2 2.3L9.2 3.3" stroke="#000" stroke-width="1.7" fill="none"/></svg>
<div class="t" style="left:1083.3px;top:361.3px;font-size:11px;color:#222;width:55.4px;text-align-last:justify;">有効フラグ</div>
<svg style="left:1046px;top:376.9px" width="12" height="12" viewBox="0 0 12 12"><rect x="1" y="1" width="10" height="10" rx="0.8" fill="#fff" stroke="#4d4d4d" stroke-width="0.9"/><path d="M3 6.2l2.2 2.3L9.2 3.3" stroke="#000" stroke-width="1.7" fill="none"/></svg>
<div class="t" style="left:1083.3px;top:377.1px;font-size:11px;color:#222;width:44.4px;text-align-last:justify;">ソート順</div>
<div class="a" style="left:37px;top:737px;width:981px;height:21px;background:#F1F1F1"></div>
<div class="a" style="left:1017px;top:737px;width:18px;height:21px;background:#F1F1F1"></div>
<div class="a" style="left:114px;top:737px;width:47px;height:19px;background:#fff;border-bottom:2px solid #217346"></div>
<div class="t" style="left:124.0px;top:740.2px;font-size:11.5px;color:#217346;font-weight:bold;transform:scaleX(0.865);transform-origin:0 0;">data1</div>
<div class="a" style="left:57px;top:744px;width:0;height:0;border-top:3.5px solid transparent;border-bottom:3.5px solid transparent;border-right:4px solid #c6c6c6"></div>
<div class="a" style="left:80px;top:744px;width:0;height:0;border-top:3.5px solid transparent;border-bottom:3.5px solid transparent;border-left:4px solid #c6c6c6"></div>
<svg style="left:185px;top:741px" width="13" height="13" viewBox="0 0 13 13"><circle cx="6.6" cy="6.2" r="5.3" fill="#f4f4f4" stroke="#666" stroke-width="1.3"/><path d="M6.6 3.4v5.6M3.8 6.2h5.6" stroke="#444" stroke-width="1.4"/></svg>
<div class="a" style="left:515px;top:744px;width:2px;height:2px;background:#666"></div>
<div class="a" style="left:515px;top:747px;width:2px;height:2px;background:#666"></div>
<div class="a" style="left:515px;top:750px;width:2px;height:2px;background:#666"></div>
<div class="a" style="left:527px;top:742px;width:491px;height:12px;background:#fff;border:1px solid #ababab"></div>
<div class="a" style="left:538px;top:742px;width:1px;height:12px;background:#ababab"></div>
<div class="a" style="left:1005px;top:742px;width:1px;height:12px;background:#ababab"></div>
<div class="a" style="left:530px;top:745px;width:0;height:0;border-top:3px solid transparent;border-bottom:3px solid transparent;border-right:3.5px solid #444"></div>
<div class="a" style="left:1010px;top:745px;width:0;height:0;border-top:3px solid transparent;border-bottom:3px solid transparent;border-left:3.5px solid #444"></div>
<div class="a" style="left:37px;top:758px;width:1239px;height:15px;background:#217346"></div>
<div class="t" style="left:45.4px;top:761.9px;font-size:9px;color:#fff;font-weight:bold;transform:scaleX(0.894);transform-origin:0 0;width:36.4px;text-align-last:justify;">準備完了</div>
<div class="t" style="left:1050.8px;top:761.9px;font-size:9px;color:#fff;font-weight:bold;transform:scaleX(0.888);transform-origin:0 0;width:64.9px;text-align-last:justify;">データの個数: 9</div>
<div class="a" style="left:1117px;top:767px;width:9px;height:1px;background:#d5e5dc"></div>
<div class="a" style="left:1131px;top:767px;width:92px;height:1px;background:#d5e5dc"></div>
<div class="a" style="left:1176px;top:763px;width:3px;height:9px;background:#fff"></div>
<div class="a" style="left:1228px;top:767px;width:9px;height:1px;background:#d5e5dc"></div>
<div class="a" style="left:1232px;top:763px;width:1px;height:9px;background:#d5e5dc"></div>
<div class="t" style="left:1246.4px;top:761.9px;font-size:9px;color:#fff;font-weight:bold;transform:scaleX(0.868);transform-origin:0 0;">100%</div>
<svg style="left:0;top:0" width="1276" height="773" viewBox="0 0 1276 773"><path d="M536.5 508 H557.5 L511 469.5 L610 508 H945.5 V602 H708 L197.5 746.6 L607 602 H536.5 Z" fill="#fff" stroke="#ED7D31" stroke-width="3.3" stroke-linejoin="miter"/></svg>
<div class="t" style="left:545.7px;top:518.4px;font-size:12.8px;color:#111;font-weight:bold;transform:scaleX(1.035);transform-origin:0 0;width:268.9px;text-align-last:justify;">[カテゴリ名]列をリスト入力形式に設定します</div>
<div class="t" style="left:545.7px;top:556.0px;font-size:12.8px;color:#111;font-weight:bold;transform:scaleX(1.027);transform-origin:0 0;width:276.4px;text-align-last:justify;">[+]ボタンでリスト用の新規シートを追加します</div>
</body></html>
